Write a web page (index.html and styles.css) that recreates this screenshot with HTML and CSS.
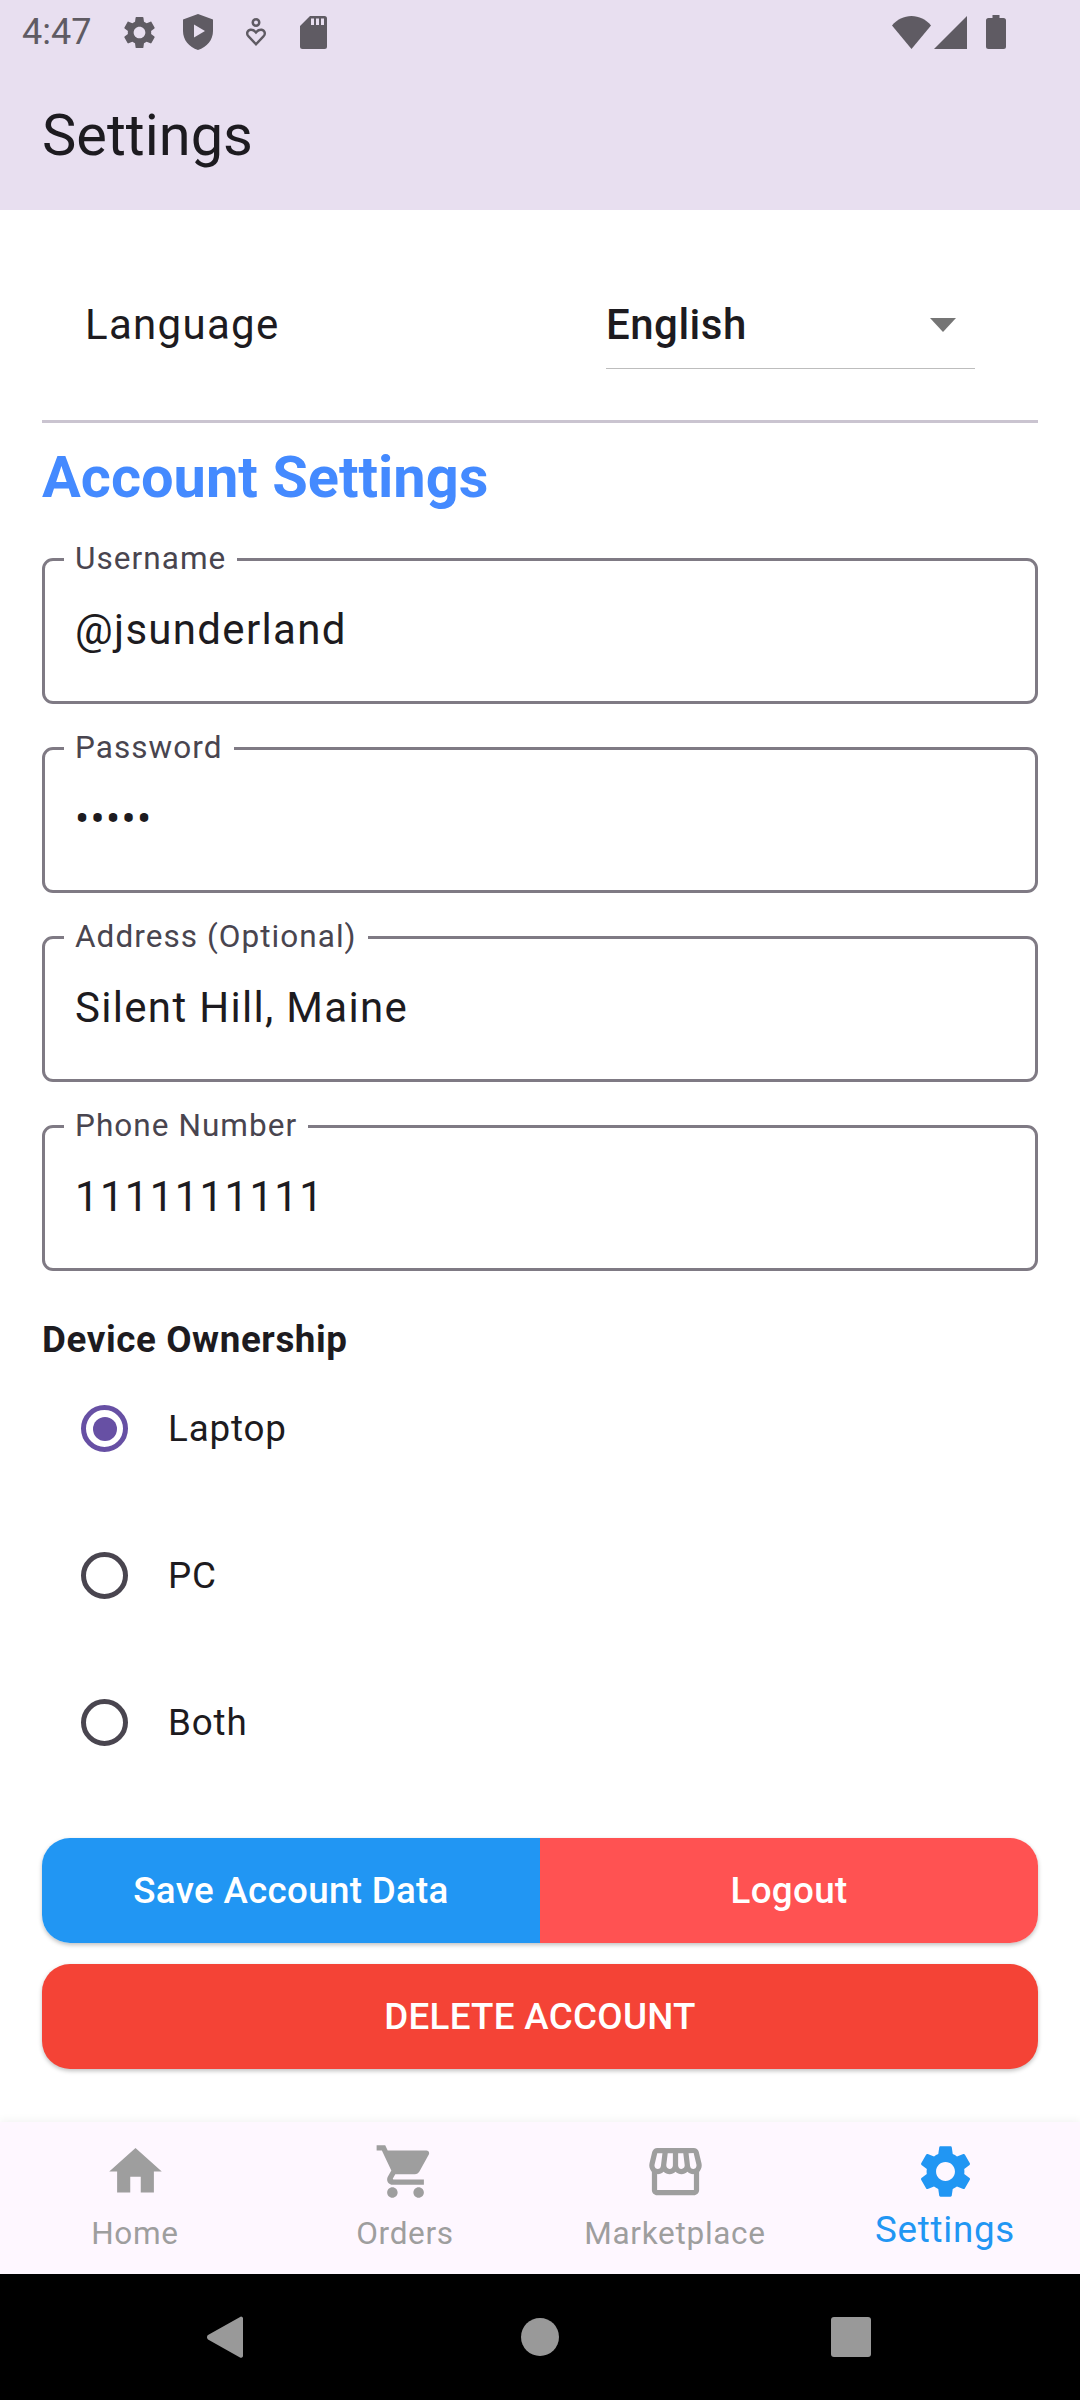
FILE: index.html
```html
<!DOCTYPE html>
<html lang="en">
<head>
<meta charset="utf-8">
<title>Settings</title>
<link rel="stylesheet" href="styles.css">
</head>
<body>
<div class="screen">
  <header class="appbar">
    <div class="status">
      <span class="time">4:47</span>
      <svg class="si gear" viewBox="0 0 24 24"><path d="M19.14 12.94c.04-.3.06-.61.06-.94 0-.32-.02-.64-.07-.94l2.03-1.58c.18-.14.23-.41.12-.61l-1.92-3.32c-.12-.22-.37-.29-.59-.22l-2.39.96c-.5-.38-1.03-.7-1.62-.94l-.36-2.54c-.04-.24-.24-.41-.48-.41h-3.84c-.24 0-.43.17-.47.41l-.36 2.54c-.59.24-1.13.57-1.62.94l-2.39-.96c-.22-.08-.47 0-.59.22L2.74 8.87c-.12.21-.08.47.12.61l2.03 1.58c-.05.3-.09.63-.09.94s.02.64.07.94l-2.03 1.58c-.18.14-.23.41-.12.61l1.92 3.32c.12.22.37.29.59.22l2.39-.96c.5.38 1.03.7 1.62.94l.36 2.54c.05.24.24.41.48.41h3.84c.24 0 .44-.17.47-.41l.36-2.54c.59-.24 1.13-.56 1.62-.94l2.39.96c.22.08.47 0 .59-.22l1.92-3.32c.12-.22.07-.47-.12-.61l-2.01-1.58zM12 15.6c-1.98 0-3.6-1.62-3.6-3.6s1.62-3.6 3.6-3.6 3.6 1.62 3.6 3.6-1.62 3.6-3.6 3.6z"/></svg>
      <svg class="si shield" viewBox="0 0 30 36"><path fill-rule="evenodd" d="M15 0 30 5.500V17C30 26 24 33 15 36 6 33 0 26 0 17V5.500ZM11 10.500V23.500L22 17Z"/></svg>
      <svg class="si heart" viewBox="0 0 20 28"><path fill-rule="evenodd" d="M10 0a4.500 4.500 0 1 1 0 9 4.500 4.500 0 0 1 0-9ZM10 2.500a2 2 0 1 0 0 4 2 2 0 0 0 0-4ZM5 10.500c2 0 3.800.9 5 2.300 1.200-1.400 3-2.300 5-2.300 3 0 5 2.200 5 4.800 0 1.600-.7 2.900-1.700 3.900L10 28 1.700 19.200C.7 18.200 0 16.900 0 15.300 0 12.700 2 10.500 5 10.500ZM5 13c-1.500 0-2.600 1-2.600 2.400 0 .9.400 1.600 1 2.200L10 24.500l6.600-6.900c.6-.6 1-1.300 1-2.200 0-1.400-1.100-2.400-2.600-2.400-1.700 0-3 1-5 3.300C8 14 6.700 13 5 13Z"/></svg>
      <svg class="si sd" viewBox="0 0 27 33"><path fill-rule="evenodd" d="M10 0H24.500A2.500 2.500 0 0 1 27 2.500V30.500A2.500 2.500 0 0 1 24.500 33H2.500A2.500 2.500 0 0 1 0 30.500V10ZM11 2.500V9H14V2.500ZM16 2.500V9H19V2.500ZM21 2.500V9H24V2.500Z"/></svg>
      <span class="spacer"></span>
      <svg class="si wifi" viewBox="0 0 39 33"><path d="M19.500 33 0 9.500C5 3.500 12 0 19.500 0S34 3.500 39 9.500Z"/></svg>
      <svg class="si signal" viewBox="0 0 33 33"><path d="M33 0V33H0Z"/></svg>
      <svg class="si battery" viewBox="0 0 20 34"><path d="M6.500 0H13.500V3H17.500A2.500 2.500 0 0 1 20 5.500V31.500A2.500 2.500 0 0 1 17.500 34H2.500A2.500 2.500 0 0 1 0 31.500V5.500A2.500 2.500 0 0 1 2.500 3H6.500Z"/></svg>
    </div>
    <h1 class="title">Settings</h1>
  </header>

  <main class="content">
    <div class="lang-row">
      <span class="lang-label">Language</span>
      <div class="lang-select">
        <span class="lang-value">English</span>
        <span class="caret"></span>
      </div>
    </div>
    <hr class="divider">
    <h2 class="section">Account Settings</h2>

    <fieldset class="field"><legend>Username</legend><span class="value">@jsunderland</span></fieldset>
    <fieldset class="field"><legend>Password</legend><span class="value">•••••</span></fieldset>
    <fieldset class="field"><legend>Address (Optional)</legend><span class="value">Silent Hill, Maine</span></fieldset>
    <fieldset class="field"><legend>Phone Number</legend><span class="value">1111111111</span></fieldset>

    <h3 class="group">Device Ownership</h3>
    <div class="radio-row"><span class="radio on"></span><span class="radio-label">Laptop</span></div>
    <div class="radio-row"><span class="radio"></span><span class="radio-label">PC</span></div>
    <div class="radio-row"><span class="radio"></span><span class="radio-label">Both</span></div>

    <div class="split">
      <button class="btn save">Save Account Data</button>
      <button class="btn logout">Logout</button>
    </div>
    <button class="btn delete">DELETE ACCOUNT</button>
  </main>

  <nav class="tabs">
    <div class="tab">
      <svg class="ti" viewBox="0 0 24 24"><path d="M10 20v-6h4v6h5v-8h3L12 3 2 12h3v8z"/></svg>
      <span>Home</span>
    </div>
    <div class="tab">
      <svg class="ti" viewBox="0 0 24 24"><path d="M7 18c-1.100 0-1.990.9-1.990 2S5.900 22 7 22s2-.9 2-2-.9-2-2-2zM1 2v2h2l3.600 7.590-1.350 2.450c-.16.28-.25.61-.25.96 0 1.100.9 2 2 2h12v-2H7.420c-.14 0-.25-.11-.25-.25l.03-.12.9-1.630h7.450c.75 0 1.410-.41 1.750-1.030l3.580-6.490c.08-.14.12-.31.12-.48 0-.55-.45-1-1-1H5.210l-.94-2H1zm16 16c-1.100 0-1.990.9-1.990 2s.89 2 1.990 2 2-.9 2-2-.9-2-2-2z"/></svg>
      <span>Orders</span>
    </div>
    <div class="tab">
      <svg class="ti" viewBox="0 0 24 24"><path d="M21.900 8.890l-1.050-4.370c-.22-.9-1-1.520-1.910-1.520H5.050c-.9 0-1.690.63-1.900 1.520L2.100 8.890c-.24 1.020-.02 2.060.62 2.880.08.11.19.19.28.29V19c0 1.100.9 2 2 2h14c1.100 0 2-.9 2-2v-6.940c.09-.09.2-.18.28-.28.64-.82.87-1.870.62-2.890zm-2.990-3.900l1.050 4.370c.1.42.01.84-.25 1.170-.14.18-.44.47-.94.47-.61 0-1.140-.49-1.210-1.140L16.980 5l1.930-.01zM13 5h1.960l.54 4.520c.05.39-.07.78-.33 1.070-.22.26-.54.41-.95.41-.67 0-1.220-.59-1.220-1.310V5zM8.490 9.520L9.040 5H11v4.690c0 .72-.55 1.310-1.290 1.310-.34 0-.65-.15-.89-.41-.25-.29-.37-.68-.33-1.070zm-4.450-.16L5.050 5h1.970l-.58 4.860c-.08.65-.6 1.140-1.210 1.140-.49 0-.8-.29-.93-.47-.27-.32-.36-.75-.26-1.170zM5 19v-6.030c.08.01.15.03.23.03.87 0 1.660-.36 2.240-.95.6.6 1.400.95 2.310.95.87 0 1.650-.36 2.230-.93.59.57 1.390.93 2.290.93.84 0 1.640-.35 2.240-.95.58.59 1.370.95 2.240.95.08 0 .15-.02.23-.03V19H5z"/></svg>
      <span>Marketplace</span>
    </div>
    <div class="tab active">
      <svg class="ti" viewBox="0 0 24 24"><path d="M19.140 12.940c.04-.3.06-.61.06-.94 0-.32-.02-.64-.07-.94l2.030-1.580c.18-.14.23-.41.12-.61l-1.920-3.320c-.12-.22-.37-.29-.59-.22l-2.390.96c-.5-.38-1.030-.7-1.620-.94l-.36-2.540c-.04-.24-.24-.41-.48-.41h-3.840c-.24 0-.43.17-.47.41l-.36 2.540c-.59.24-1.130.57-1.620.94l-2.390-.96c-.22-.08-.47 0-.59.22L2.740 8.870c-.12.21-.08.47.12.61l2.030 1.580c-.05.3-.09.63-.09.94s.02.64.07.94l-2.030 1.580c-.18.14-.23.41-.12.61l1.920 3.320c.12.22.37.29.59.22l2.390-.96c.5.38 1.030.7 1.620.94l.36 2.540c.05.24.24.41.48.41h3.840c.24 0 .44-.17.47-.41l.36-2.540c.59-.24 1.130-.56 1.620-.94l2.390.96c.22.08.47 0 .59-.22l1.920-3.320c.12-.22.07-.47-.12-.61l-2.010-1.580zM12 15.600c-1.980 0-3.600-1.620-3.600-3.600s1.620-3.600 3.600-3.600 3.600 1.620 3.600 3.600-1.620 3.600-3.600 3.600z"/></svg>
      <span>Settings</span>
    </div>
  </nav>

  <footer class="sysnav">
    <svg class="back" viewBox="0 0 36 42"><path d="M34 0.500a2 2 0 0 1 2 1.500V40a2 2 0 0 1-3 1.500L1 23.500a3 3 0 0 1 0-4.500Z"/></svg>
    <span class="home-btn"></span>
    <span class="square"></span>
  </footer>
</div>
</body>
</html>
```
FILE: styles.css
```css
* { box-sizing: border-box; }
html, body { margin: 0; padding: 0; background: #fff; }
body { font-family: Roboto, "Liberation Sans", sans-serif; color: #1d1b20; }
.screen { width: 1080px; height: 2400px; display: flex; flex-direction: column; overflow: hidden; }

.appbar { height: 210px; background: #e8dff0; flex: none; }
.status { height: 64px; display: flex; align-items: center; padding: 0 74px 0 22px; }
.time { font-size: 36px; color: #5f5b63; line-height: 1; }
.si { fill: #5f5b63; display: block; flex: none; }
.gear { width: 39px; height: 39px; margin-left: 28.500px; }
.shield { width: 30px; height: 36px; margin-left: 24px; }
.heart { width: 20px; height: 28px; margin-left: 33px; }
.sd { width: 27px; height: 33px; margin-left: 34px; }
.spacer { flex: 1; }
.wifi { width: 39px; height: 33px; }
.signal { width: 33px; height: 33px; margin-left: 3px; }
.battery { width: 20px; height: 34px; margin-left: 19px; }
.title { margin: 39px 0 0 42px; font-size: 57.750px; line-height: 64px; font-weight: 400; color: #1d1b20; }

.content { flex: 1; padding: 0 42px; min-height: 0; }
.lang-row { display: flex; height: 158px; }
.lang-label { margin: 80px 0 0 43px; width: 521px; height: 70px; font-size: 42px; line-height: 70px; letter-spacing: 1.310px; color: #1d1b20; }
.lang-select { width: 369px; height: 158px; padding-top: 80px; display: flex; position: relative; }
.lang-value { font-size: 42px; line-height: 70px; font-weight: 500; letter-spacing: .5px; color: #1d1b20; }
.lang-select::after { content: ""; position: absolute; left: 0; right: 0; top: 158px; height: 1px; background: #bdbdbd; }
.caret { position: absolute; left: 324px; top: 108px; border: 13px solid transparent; border-top: 14px solid #757575; border-bottom: 0; }
.divider { margin: 52px 0 0; border: 0; height: 3px; background: #cac4d0; }
.section { margin: 3.500px 0 17.500px; font-size: 57.750px; line-height: 100px; font-weight: 700; color: #448aff; }

.field { margin: 0 0 29px; padding: 0 30px; height: 160px; border: 3px solid #7f7a84; border-radius: 11px; display: block; min-width: 0; }
.field legend { padding: 0 11px; font-size: 31.500px; line-height: 30px; letter-spacing: 1.050px; color: #49454f; margin-left: -11px; }
.value { display: block; font-size: 42px; line-height: 64px; letter-spacing: 1.310px; color: #1d1b20; margin-top: 24px; }

.group { margin: 52px 0 0; font-size: 36.750px; line-height: 34px; font-weight: 700; color: #1d1b20; letter-spacing: .6px; }
.radio-row { height: 147px; display: flex; align-items: center; padding-left: 39px; }
.group + .radio-row { margin-top: -2px; }
.radio { width: 47px; height: 47px; border: 5px solid #49454f; border-radius: 50%; flex: none; display: flex; align-items: center; justify-content: center; }
.radio.on { border-color: #6750a4; }
.radio.on::after { content: ""; width: 24px; height: 24px; border-radius: 50%; background: #6750a4; }
.radio-label { margin-left: 40px; font-size: 36.750px; letter-spacing: .85px; color: #1d1b20; }

.split { display: flex; height: 105px; border-radius: 28px; overflow: hidden; margin-top: 42px; box-shadow: 0 2px 4px rgba(0,0,0,.25); }
.btn { border: 0; padding: 0; color: #fff; font-family: inherit; font-size: 36.750px; font-weight: 500; letter-spacing: .3px; display: block; }
.save { flex: 1; background: #2196f3; }
.logout { flex: 1; background: #ff5252; }
.delete { width: 100%; height: 105px; margin-top: 21px; border-radius: 28px; background: #f44336; box-shadow: 0 2px 4px rgba(0,0,0,.25); }

.tabs { height: 152px; flex: none; background: #fef7ff; display: flex; box-shadow: 0 -2px 8px rgba(0,0,0,.05); }
.tab { flex: 1; display: flex; flex-direction: column; align-items: center; padding-top: 18px; color: #9e9e9e; font-size: 31.500px; letter-spacing: .7px; }
.tab span { line-height: 44px; margin-top: 9px; }
.ti { width: 63px; height: 63px; fill: #9e9e9e; display: block; flex: none; }
.tab.active { color: #2196f3; font-size: 36.750px; letter-spacing: .75px; }
.tab.active .ti { fill: #2196f3; }
.tab.active span { margin-top: 5px; }

.sysnav { height: 126px; flex: none; background: #000; display: flex; align-items: center; }
.back { width: 36px; height: 42px; fill: #999; margin-left: 207px; flex: none; }
.home-btn { width: 38px; height: 38px; border-radius: 50%; background: #999; margin-left: 278px; flex: none; }
.square { width: 40px; height: 40px; border-radius: 3px; background: #999; margin-left: 272px; flex: none; }
```
